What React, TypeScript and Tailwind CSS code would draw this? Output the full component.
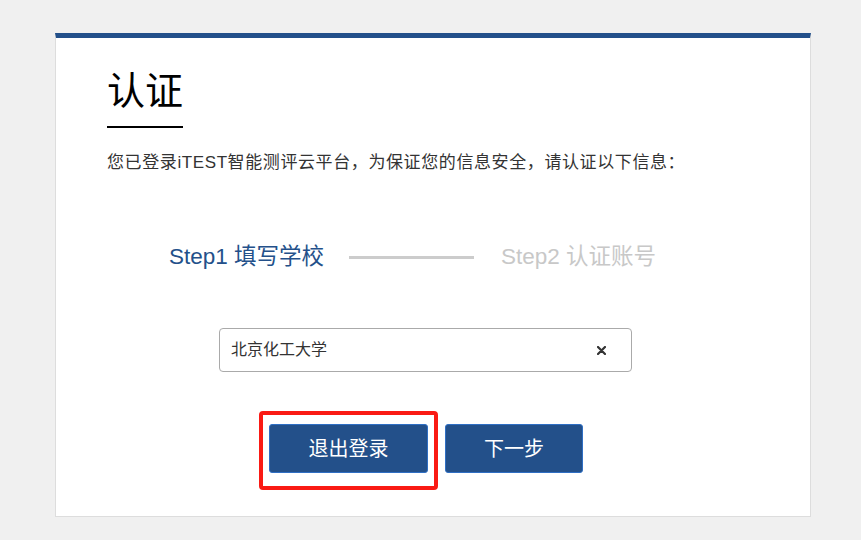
export default function App() {
  const font = { fontFamily: '"Liberation Sans", "Noto Sans CJK SC", sans-serif' };
  return (
    <div className="min-h-[540px] w-full bg-[#f0f0f0] pt-[33px]" style={font}>
      <div className="ml-[55px] w-[756px] h-[484px] bg-white border-t-[5px] border-t-[#23508a] border-x border-b border-x-[#dddddd] border-b-[#dddddd] px-[51px]">
        {/* title */}
        <div className="pt-[34px]">
          <h1 className="inline-block text-[38px] leading-[38px] text-black border-b-2 border-black pb-[16px]">
            认证
          </h1>
        </div>
        <p className="mt-[23px] text-[17px] leading-[24px] tracking-[0.6px] text-[#333333]">
          您已登录iTEST智能测评云平台，为保证您的信息安全，请认证以下信息：
        </p>

        {/* steps */}
        <div className="mt-[67px] ml-[62px] flex items-center h-[30px]">
          <span className="text-[22.5px] text-[#23508a]">Step1 填写学校</span>
          <span className="ml-[25px] w-[125px] h-[3px] bg-[#cccccc]" />
          <span className="ml-[27px] text-[22.5px] text-[#c8c8c8]">Step2 认证账号</span>
        </div>

        {/* school input */}
        <div className="mt-[56px] ml-[112px] w-[413px] h-[44px] border border-[#aaaaaa] rounded-[4px] flex items-center justify-between pl-[11px] pr-[25px]">
          <span className="text-[16px] text-[#333333]">北京化工大学</span>
          <svg width="9" height="9" viewBox="0 0 9 9">
            <path d="M1 1 L8 8 M8 1 L1 8" stroke="#333" strokeWidth="2.2" strokeLinecap="round" />
          </svg>
        </div>

        {/* buttons */}
        <div className="mt-[52px] ml-[162px] flex gap-[17px]">
          <div className="relative">
            <button className="w-[159px] h-[49px] bg-[#23508a] border border-[#2f6fc4] rounded-[3px] text-white text-[20px]">
              退出登录
            </button>
            <div className="absolute left-[-10px] top-[-13px] w-[179px] h-[79px] border-[4px] border-[#fa1a14] rounded-[4px] pointer-events-none" />
          </div>
          <button className="w-[138px] h-[49px] bg-[#23508a] border border-[#2f6fc4] rounded-[3px] text-white text-[20px]">
            下一步
          </button>
        </div>
      </div>
    </div>
  );
}
